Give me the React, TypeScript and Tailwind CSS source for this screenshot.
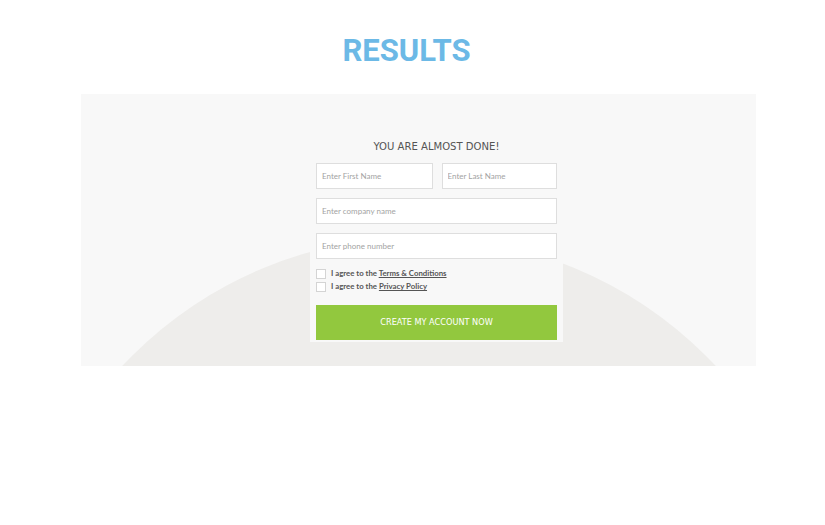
import React from 'react';

const font = { fontFamily: 'Lato, "Noto Sans", sans-serif' };
const narrow = { fontFamily: '"Liberation Sans Narrow", "DejaVu Sans Condensed", Lato, sans-serif' };

const Field: React.FC<{ placeholder: string; className?: string }> = ({ placeholder, className = '' }) => (
  <input
    placeholder={placeholder}
    className={`h-[26px] border border-[#dedede] bg-white px-[5px] text-[8px] text-[#555] placeholder:text-[#a3a3a3] outline-none ${className}`}
  />
);

const Agree: React.FC<{ link: string }> = ({ link }) => (
  <label className="flex items-center gap-[5px] text-[7.8px] font-bold text-[#555] leading-[13px]">
    <span className="w-[10px] h-[10px] border border-[#d4d4d4] bg-white" />
    <span>
      I agree to the <span className="underline">{link}</span>
    </span>
  </label>
);

export default function App() {
  return (
    <div className="min-h-[525px] bg-white pt-[33px]" style={font}>
      <h1
        className="text-center pr-[12px] text-[31px] leading-[36px] font-bold text-[#6cb9e6]"
        style={{ fontFamily: 'Roboto, sans-serif' }}
      >
        RESULTS
      </h1>

      <div className="relative mt-[25px] ml-[81px] w-[675px] h-[272px] bg-[#f8f8f8] overflow-hidden">
        {/* background arc */}
        <div className="absolute left-[-68px] top-[143px] w-[812px] h-[812px] rounded-full bg-[#eeedeb]" />

        <div className="relative ml-[229px] mt-[42px] w-[253px] bg-[#f8f8f8] px-[6px] pb-[2px]">
          <h2 className="text-center text-[11.2px] leading-[22px] text-[#555] mb-[5px]" style={narrow}>
            YOU ARE ALMOST DONE!
          </h2>
          <div className="flex flex-col gap-[9px]">
            <div className="flex gap-[9px]">
              <Field placeholder="Enter First Name" className="w-[117px]" />
              <Field placeholder="Enter Last Name" className="w-[116px]" />
            </div>
            <Field placeholder="Enter company name" className="w-full" />
            <Field placeholder="Enter phone number" className="w-full" />
          </div>
          <div className="mt-[8px] flex flex-col">
            <Agree link="Terms & Conditions" />
            <Agree link="Privacy Policy" />
          </div>
          <button className="mt-[12px] w-full h-[35px] bg-[#92c83e] text-white text-[9.1px] uppercase" style={narrow}>
            Create my account now
          </button>
        </div>
      </div>
    </div>
  );
}
